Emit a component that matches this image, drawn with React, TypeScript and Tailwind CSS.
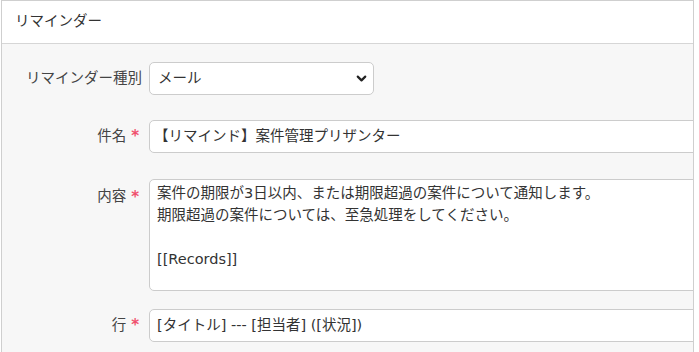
import { ChevronDown } from "lucide-react";

function Label({ text, required }: { text: string; required?: boolean }) {
    return (
        <div className="w-[140px] shrink-0 flex justify-end items-center text-[#444]">
            <span>{text}</span>
            {required && <span className="ml-[5px] mr-[3px] text-[#f0506e] text-[15px] font-bold">*</span>}
        </div>
    );
}

export default function App() {
    return (
        <div
            className="h-[352px] bg-white overflow-hidden pl-px"
            style={{ fontFamily: '"DejaVu Sans", "Noto Sans CJK JP", sans-serif' }}
        >
            <div className="w-[693px] h-[400px] border border-[#cfcfcf] overflow-hidden text-[14.5px] text-[#333]">
                <div className="h-[43px] bg-white border-b border-[#d6d6d6] flex items-center pl-[13px]">
                    リマインダー
                </div>
                <div className="bg-[#f7f7f7] pt-[18px] h-full">
                    <div className="flex items-center gap-[7px]">
                        <Label text="リマインダー種別" />
                        <div className="w-[225px] h-[33px] bg-white border border-[#cccccc] rounded-[5px] flex items-center justify-between pl-[8px] pr-[4px]">
                            <span>メール</span>
                            <ChevronDown size={15} strokeWidth={3.5} className="text-[#222]" />
                        </div>
                    </div>
                    <div className="flex items-center gap-[7px] mt-[25px]">
                        <Label text="件名" required />
                        <div className="w-[600px] shrink-0 h-[33px] bg-white border border-[#cccccc] rounded-[5px] flex items-center pl-[4px]">
                            【リマインド】案件管理プリザンター
                        </div>
                    </div>
                    <div className="flex items-start gap-[7px] mt-[26px]">
                        <div className="pt-[7px] flex">
                            <Label text="内容" required />
                        </div>
                        <div className="w-[600px] shrink-0 h-[112px] bg-white border border-[#cccccc] rounded-[5px] pl-[7px] pt-[2px] leading-[22px]">
                            <div>案件の期限が3日以内、または期限超過の案件について通知します。</div>
                            <div>期限超過の案件については、至急処理をしてください。</div>
                            <div>&nbsp;</div>
                            <div>[[Records]]</div>
                        </div>
                    </div>
                    <div className="flex items-center gap-[7px] mt-[18px]">
                        <Label text="行" required />
                        <div className="w-[600px] shrink-0 h-[33px] bg-white border border-[#cccccc] rounded-[5px] flex items-center pl-[7px]">
                            [タイトル] --- [担当者] ([状況])
                        </div>
                    </div>
                </div>
            </div>
        </div>
    );
}
